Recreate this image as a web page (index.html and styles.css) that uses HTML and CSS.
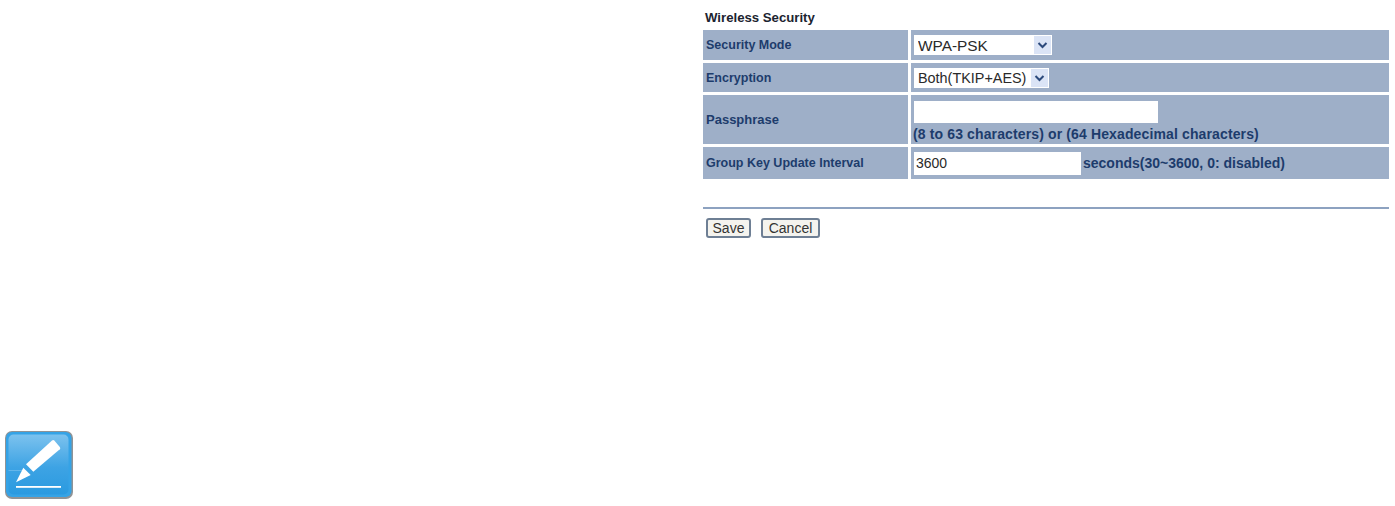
FILE: index.html
```html
<!DOCTYPE html>
<html>
	<head>
		<meta charset="utf-8">
		<title>Wireless Security</title>
		<link rel="stylesheet" href="styles.css">
	</head>
	<body>
		<div id="content">
			<div class="sectionTitle">Wireless Security</div>
			<table class="settings">
				<tr class="row30">
					<td class="label">Security Mode</td>
					<td class="field">
						<span class="selectBox mode">
							<select><option>WPA-PSK</option></select>
							<svg class="arrow" viewBox="0 0 17 18"><path d="M4.500 7l4 4 4-4" /></svg>
						</span>
					</td>
				</tr>
				<tr class="row29">
					<td class="label">Encryption</td>
					<td class="field">
						<span class="selectBox encryption">
							<select><option>Both(TKIP+AES)</option></select>
							<svg class="arrow" viewBox="0 0 17 18"><path d="M4.500 7l4 4 4-4" /></svg>
						</span>
					</td>
				</tr>
				<tr class="row49">
					<td class="label passLabel">Passphrase</td>
					<td class="field">
						<input type="text" class="passphrase">
						<div class="hint">(8 to 63 characters) or (64 Hexadecimal characters)</div>
					</td>
				</tr>
				<tr class="row32">
					<td class="label">Group Key Update Interval</td>
					<td class="field inline">
						<input type="text" class="interval" value="3600"><span class="hint">seconds(30~3600, 0: disabled)</span>
					</td>
				</tr>
			</table>
			<hr class="rule">
			<div class="buttons">
				<button class="save">Save</button>
				<button class="cancel">Cancel</button>
			</div>
		</div>

		<svg class="noteIcon" viewBox="0 0 68 68">
			<defs>
				<linearGradient id="noteFill" x1="0" y1="0" x2="0" y2="1">
					<stop offset="0" stop-color="#7cc2ee" />
					<stop offset="0.55" stop-color="#3da3e4" />
					<stop offset="1" stop-color="#2a9ae0" />
				</linearGradient>
			</defs>
			<rect x="0" y="0" width="68" height="68" rx="7" fill="#8f9396" />
			<rect x="1" y="1" width="65.500" height="65" rx="6" fill="#35a3e6" />
			<rect x="3.500" y="3.500" width="60" height="60" rx="5" fill="url(#noteFill)" />
			<rect x="3.500" y="39" width="17" height="0.600" fill="#7fc3ee" />
			<path d="M47 9.500q1.300-1 2.300 0l5.500 6.500q1 1.300 0 2.300L28.300 40.700 21 33.300z" fill="#fff" />
			<path d="M18.300 36.700L25.700 44 11 51.300z" fill="#fff" />
			<rect x="11" y="55" width="45" height="1.800" fill="#fff" />
		</svg>
	</body>
</html>
```

FILE: styles.css
```css
html, body {
	margin: 0;
	padding: 0;
	background: #fff;
}

body {
	height: 506px;
	overflow: hidden;
	font-family: "Liberation Sans", Arial, sans-serif;
}

div#content {
	width: 686px;
	margin-left: 703px;
	padding-top: 10px;
}

div.sectionTitle {
	height: 20px;
	margin-left: 2px;
	font-size: 13.2px;
	line-height: 15px;
	font-weight: bold;
	color: #1c2430;
}

table.settings {
	width: 686px;
	border-collapse: separate;
	border-spacing: 0;
	table-layout: fixed;
}

table.settings tr.row30 td { height: 30px; }
table.settings tr.row29 td { height: 29px; border-top: 3px solid #fff; }
table.settings tr.row49 td { height: 49px; border-top: 3px solid #fff; }
table.settings tr.row32 td { height: 32px; border-top: 3px solid #fff; }

td.label {
	width: 208px;
	padding: 0 0 0 3px;
	box-sizing: border-box;
	background: #9eafc8;
	font-size: 12.5px;
	font-weight: bold;
	color: #1d3c6c;
	border-right: 3px solid #fff;
}

td.passLabel {
	font-size: 13px;
}

td.field {
	padding: 0 0 0 3px;
	background: #9eafc8;
	vertical-align: middle;
}

span.selectBox {
	position: relative;
	display: block;
	height: 20px;
	background: #fff;
}

span.selectBox.mode { width: 138px; }
span.selectBox.encryption { width: 135px; }

span.selectBox select {
	display: block;
	width: 100%;
	height: 20px;
	padding: 0 0 0 4px;
	border: 0;
	background: #fff;
	appearance: none;
	font-family: "Liberation Sans", Arial, sans-serif;
	color: #2a2a2a;
}

span.selectBox.mode select { font-size: 15.400px; }
span.selectBox.encryption select { font-size: 14.4px; }

svg.arrow {
	position: absolute;
	top: 1px;
	right: 1px;
	width: 17px;
	height: 18px;
	background: #dbe4f6;
}

svg.arrow path {
	fill: none;
	stroke: #2c4a7c;
	stroke-width: 2;
}

input.passphrase, input.interval {
	display: block;
	box-sizing: border-box;
	border: 0;
	background: #fff;
	padding: 0 0 0 2px;
	font-family: "Liberation Sans", Arial, sans-serif;
	font-size: 14px;
	color: #2a2a2a;
}

input.passphrase {
	width: 244px;
	height: 22px;
	margin-top: 3px;
}

input.interval {
	width: 167px;
	height: 23px;
}

td.field.inline > * {
	vertical-align: middle;
}

td.field.inline input.interval {
	display: inline-block;
}

.hint {
	font-size: 14px;
	font-weight: bold;
	line-height: 16px;
	color: #1d3c6c;
}

div.hint {
	margin-top: 3px;
	margin-left: -1px;
	letter-spacing: 0.13px;
}

span.hint {
	margin-left: 2px;
}

hr.rule {
	height: 2px;
	margin: 28px 0 0 0;
	border: 0;
	background: #8da2c0;
}

div.buttons {
	display: flex;
	gap: 10px;
	margin: 9px 0 0 3px;
}

div.buttons button {
	box-sizing: border-box;
	height: 20px;
	padding: 0;
	border: 2px solid #6e7f94;
	border-radius: 3px;
	background: #f4f3ee;
	font-family: "Liberation Sans", Arial, sans-serif;
	font-size: 14px;
	line-height: 15px;
	color: #333;
}

button.save { width: 45px; }
button.cancel { width: 59px; }

svg.noteIcon {
	display: block;
	width: 68px;
	height: 68px;
	margin: 193px 0 0 5px;
}
```
